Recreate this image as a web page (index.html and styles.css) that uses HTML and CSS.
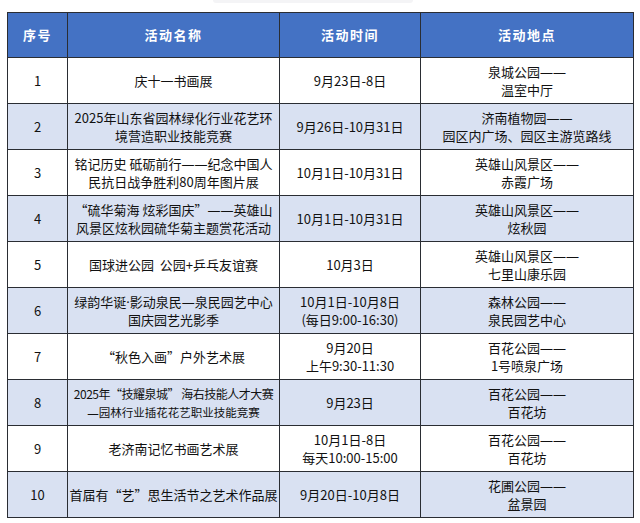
FILE: index.html
```html
<!DOCTYPE html>
<html lang="zh-CN">
<head>
<meta charset="utf-8">
<title>活动安排</title>
<link rel="stylesheet" href="styles.css">
</head>
<body>
<div class="page">
  <div class="shade-top"></div>
  <table class="events">
    <colgroup>
      <col class="c-no"><col class="c-name"><col class="c-time"><col class="c-place">
    </colgroup>
    <thead>
      <tr><th>序号</th><th>活动名称</th><th>活动时间</th><th>活动地点</th></tr>
    </thead>
    <tbody>
      <tr><td>1</td><td>庆十一书画展</td><td>9月23日-8日</td><td>泉城公园<span class="latin">——</span><br>温室中厅</td></tr>
      <tr class="alt"><td>2</td><td>2025年山东省园林绿化行业花艺环<br>境营造职业技能竞赛</td><td>9月26日-10月31日</td><td>济南植物园<span class="latin">——</span><br>园区内广场、园区主游览路线</td></tr>
      <tr><td>3</td><td>铭记历史 砥砺前行<span class="latin">——</span>纪念中国人<br>民抗日战争胜利80周年图片展</td><td>10月1日-10月31日</td><td>英雄山风景区<span class="latin">——</span><br>赤霞广场</td></tr>
      <tr class="alt"><td>4</td><td>“硫华菊海 炫彩国庆”<span class="latin">——</span>英雄山<br>风景区炫秋园硫华菊主题赏花活动</td><td>10月1日-10月31日</td><td>英雄山风景区<span class="latin">——</span><br>炫秋园</td></tr>
      <tr><td>5</td><td>国球进公园&nbsp; 公园+乒乓友谊赛</td><td>10月3日</td><td>英雄山风景区<span class="latin">——</span><br>七里山康乐园</td></tr>
      <tr class="alt"><td>6</td><td>绿韵华诞<span class="latin">·</span>影动泉民<span class="latin">—</span>泉民园艺中心<br>国庆园艺光影季</td><td>10月1日-10月8日<br>(每日9:00-16:30)</td><td>森林公园<span class="latin">——</span><br>泉民园艺中心</td></tr>
      <tr><td>7</td><td>“秋色入画”户外艺术展</td><td>9月20日<br>上午9:30-11:30</td><td>百花公园<span class="latin">——</span><br>1号喷泉广场</td></tr>
      <tr class="alt"><td>8</td><td><span class="tight">2025年“技耀泉城” 海右技能人才大赛</span><br><span class="small"><span class="latin">—</span>园林行业插花花艺职业技能竞赛</span></td><td>9月23日</td><td>百花公园<span class="latin">——</span><br>百花坊</td></tr>
      <tr><td>9</td><td>老济南记忆书画艺术展</td><td>10月1日-8日<br>每天10:00-15:00</td><td>百花公园<span class="latin">——</span><br>百花坊</td></tr>
      <tr class="alt"><td>10</td><td>首届有“艺”思生活节之艺术作品展</td><td>9月20日-10月8日</td><td>花圃公园<span class="latin">——</span><br>盆景园</td></tr>
    </tbody>
  </table>
</div>
</body>
</html>
```

FILE: styles.css
```css
html, body {
  margin: 0;
  padding: 0;
  background: #ffffff;
}
.page {
  position: relative;
  width: 640px;
  height: 523px;
  padding: 12px 0 0 7px;
  box-sizing: border-box;
  font-family: "Noto Sans CJK SC", "Noto Sans", sans-serif;
  color: #111111;
}
.shade-top {
  position: absolute;
  left: 213px;
  top: 0;
  width: 200px;
  height: 3px;
  background: #f4f4f6;
  border-radius: 0 0 4px 4px;
}
.events {
  border-collapse: collapse;
  table-layout: fixed;
  width: 626px;
}
.c-no { width: 60px; }
.c-name { width: 212px; }
.c-time { width: 141px; }
.c-place { width: 213px; }
.events th,
.events td {
  border: 1px solid #2a2d33;
  padding: 0;
  text-align: center;
  vertical-align: middle;
  white-space: nowrap;
  overflow: hidden;
  font-size: 13px;
  line-height: 18px;
}
.events thead tr { height: 45px; }
.events th {
  background: #4472c4;
  color: #ffffff;
  font-weight: bold;
  letter-spacing: 1.5px;
}
.events tbody tr { height: 46px; background: #ffffff; }
.events tbody tr.alt { background: #d9e1f2; }
.latin {
  font-family: "Noto Sans", sans-serif;
}
.tight {
  font-size: 12px;
  letter-spacing: -0.5px;
}
.small {
  font-size: 11.5px;
  line-height: 17px;
}
```
